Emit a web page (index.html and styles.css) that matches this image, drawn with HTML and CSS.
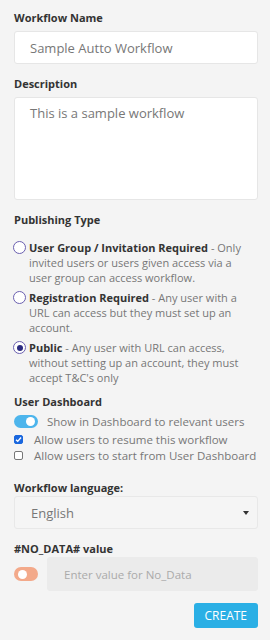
FILE: index.html
```html
<!DOCTYPE html>
<html lang="en">
<head>
    <meta charset="UTF-8">
    <title>New Workflow</title>
    <link rel="stylesheet" href="styles.css">
</head>
<body>
    <div class="form-container">
        <div class="field">
            <label class="field-label">Workflow Name</label>
            <input class="text-input" type="text" value="Sample Autto Workflow">
        </div>

        <div class="field">
            <label class="field-label">Description</label>
            <textarea class="text-area">This is a sample workflow</textarea>
        </div>

        <div class="field publishing">
            <label class="field-label">Publishing Type</label>
            <div class="radio-row">
                <span class="radio"></span>
                <p><b>User Group / Invitation Required</b> - Only invited users or users given access via a user group can access workflow.</p>
            </div>
            <div class="radio-row">
                <span class="radio"></span>
                <p><b>Registration Required</b> - Any user with a URL can access but they must set up an account.</p>
            </div>
            <div class="radio-row">
                <span class="radio checked"></span>
                <p><b>Public</b> - Any user with URL can access, without setting up an account, they must accept T&amp;C's only</p>
            </div>
        </div>

        <div class="field dashboard">
            <label class="field-label">User Dashboard</label>
            <div class="toggle-row">
                <span class="toggle on"></span>
                <span>Show in Dashboard to relevant users</span>
            </div>
            <div class="check-row">
                <span class="checkbox checked">
                    <svg width="7" height="7" viewBox="0 0 8 8"><path d="M1.2 4.3 L3.1 6.1 L6.9 1.7" fill="none" stroke="#fff" stroke-width="1.6"/></svg>
                </span>
                <span>Allow users to resume this workflow</span>
            </div>
            <div class="check-row">
                <span class="checkbox"></span>
                <span>Allow users to start from User Dashboard</span>
            </div>
        </div>

        <div class="field">
            <label class="field-label tight">Workflow language:</label>
            <div class="select-box">
                <span>English</span>
                <span class="caret"></span>
            </div>
        </div>

        <div class="field">
            <label class="field-label tight">#NO_DATA# value</label>
            <div class="nodata-row">
                <span class="toggle off"></span>
                <input class="text-input disabled" type="text" placeholder="Enter value for No_Data" disabled>
            </div>
        </div>

        <div class="actions">
            <button class="create-btn">CREATE</button>
        </div>
    </div>
</body>
</html>
```

FILE: styles.css
```css
body {
    margin: 0;
    font-family: "Open Sans", Arial, sans-serif;
    background-color: #f4f4f4;
    color: #777;
}

.form-container {
    padding: 10px 12px 10px 14px;
}

.field {
    margin-bottom: 12px;
}

.field-label {
    display: block;
    font-size: 11px;
    line-height: 15px;
    font-weight: bold;
    color: #333;
    margin-bottom: 6px;
}

.field-label.tight {
    margin-bottom: 1px;
}

.text-input, .text-area {
    box-sizing: border-box;
    width: 100%;
    height: 33px;
    border: 1px solid #e6e6e6;
    border-radius: 3px;
    background-color: #fff;
    padding: 0 15px;
    font-family: inherit;
    font-size: 13px;
    color: #777;
    outline: none;
}

.text-input {
    display: block;
}

.text-area {
    display: block;
    height: 103px;
    padding: 6px 15px;
    resize: none;
}

/* publishing type */
.publishing {
    margin-bottom: 9px;
}

.publishing .field-label {
    margin-bottom: 13px;
}

.radio-row {
    display: flex;
    align-items: flex-start;
    margin-bottom: 5px;
}

.radio-row:last-child {
    margin-bottom: 0;
}

.radio-row p {
    margin: 0;
    padding-right: 10px;
    font-size: 11px;
    line-height: 15px;
}

.radio-row b {
    color: #333;
}

.radio {
    flex: none;
    box-sizing: border-box;
    width: 13px;
    height: 13px;
    margin: 1px 3px 0 -1px;
    border: 1px solid #6a5fb0;
    border-radius: 50%;
    background-color: #fff;
    position: relative;
}

.radio.checked::after {
    content: "";
    position: absolute;
    left: 2.5px;
    top: 2.5px;
    width: 6px;
    height: 6px;
    border-radius: 50%;
    background-color: #2b2a80;
}

/* user dashboard */
.dashboard {
    margin-bottom: 17px;
}

.dashboard .field-label {
    margin-bottom: 5px;
}

.toggle-row, .check-row {
    display: flex;
    align-items: center;
    height: 15px;
    font-size: 11.5px;
}

.toggle-row {
    margin-bottom: 3px;
}

.check-row {
    margin-bottom: 1px;
}

.toggle {
    flex: none;
    box-sizing: border-box;
    width: 24px;
    height: 13px;
    border-radius: 7px;
    margin-right: 9px;
    position: relative;
}

.toggle::after {
    content: "";
    position: absolute;
    top: 2px;
    width: 9px;
    height: 9px;
    border-radius: 50%;
    background-color: #fff;
}

.toggle.on {
    background-color: #4db5ec;
}

.toggle.on::after {
    right: 3px;
}

.toggle.off {
    height: 14px;
    background-color: #f3a98a;
}

.toggle.off::after {
    top: 2.5px;
    left: 4px;
}

.checkbox {
    flex: none;
    box-sizing: border-box;
    width: 9px;
    height: 9px;
    margin-right: 11px;
    border: 1px solid #777;
    border-radius: 2px;
    background-color: #fff;
    display: flex;
    align-items: center;
    justify-content: center;
}

.checkbox.checked {
    background-color: #1a67de;
    border-color: #1a67de;
}

/* language select */
.select-box {
    box-sizing: border-box;
    height: 33px;
    border: 1px solid #e8e8e8;
    border-radius: 3px;
    background-color: #f5f5f5;
    padding: 0 8px 0 16px;
    display: flex;
    align-items: center;
    justify-content: space-between;
    font-size: 13px;
}

.caret {
    width: 0;
    height: 0;
    border-left: 3.5px solid transparent;
    border-right: 3.5px solid transparent;
    border-top: 4px solid #333;
}

.nodata-row {
    display: flex;
    align-items: center;
}

.text-input.disabled {
    height: 34px;
    background-color: #ebebeb;
    border-color: #ebebeb;
    padding-left: 16px;
    font-size: 11.5px;
}

.text-input.disabled::placeholder {
    color: #aaa;
}

.actions {
    display: flex;
    justify-content: flex-end;
}

.create-btn {
    height: 25px;
    padding: 0 11px;
    background-color: #2aafe5;
    color: #fff;
    border: none;
    border-radius: 3px;
    font-family: inherit;
    font-size: 12px;
    cursor: pointer;
}
```
